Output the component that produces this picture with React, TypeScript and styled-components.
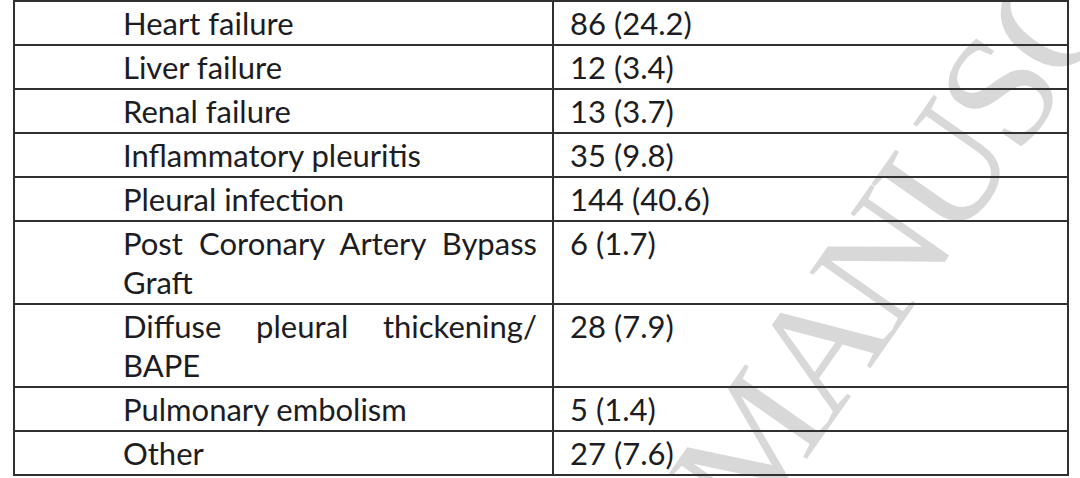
import React from 'react';
import styled, { createGlobalStyle } from 'styled-components';

type Row = { cause: string; count: string; justify?: boolean };

const rows: Row[] = [
  { cause: 'Heart failure', count: '86 (24.2)' },
  { cause: 'Liver failure', count: '12 (3.4)' },
  { cause: 'Renal failure', count: '13 (3.7)' },
  { cause: 'Inflammatory pleuritis', count: '35 (9.8)' },
  { cause: 'Pleural infection', count: '144 (40.6)' },
  { cause: 'Post Coronary Artery Bypass Graft', count: '6 (1.7)', justify: true },
  { cause: 'Diffuse pleural thickening/ BAPE', count: '28 (7.9)', justify: true },
  { cause: 'Pulmonary embolism', count: '5 (1.4)' },
  { cause: 'Other', count: '27 (7.6)' },
];

const GlobalStyle = createGlobalStyle`
  html, body {
    margin: 0;
    padding: 0;
    background: #ffffff;
    overflow: hidden;
  }
`;

const Page = styled.div`
  position: relative;
  width: 1080px;
  height: 478px;
  overflow: hidden;
  padding: 0 0 0 13px;
  box-sizing: border-box;
  background: #ffffff;
`;

// sits under the table so the rules stay on top
const Watermark = styled.span`
  position: absolute;
  left: 708px;
  top: 426px;
  font-family: 'Liberation Serif', 'Times New Roman', serif;
  font-size: 160px;
  letter-spacing: -0.04em;
  line-height: 1;
  color: #d8d8d8;
  white-space: nowrap;
  transform-origin: 0 50%;
  transform: rotate(-55deg);
  pointer-events: none;
  user-select: none;
`;

const Table = styled.table`
  position: relative;
  width: 1054px;
  border-collapse: collapse;
  table-layout: fixed;
  font-family: Lato, 'Open Sans', sans-serif;
  font-size: 31px;
  line-height: 39px;
  color: #1c1c22;
`;

const Col = styled.col<{ $w: number }>`
  width: ${(p) => p.$w}px;
`;

const Cell = styled.td<{ $first?: boolean; $justify?: boolean }>`
  border: 2px solid #303030;
  padding: 2px 15px 1px ${(p) => (p.$first ? '108px' : '16px')};
  vertical-align: top;
  text-align: ${(p) => (p.$justify ? 'justify' : 'left')};
  text-align-last: left;
`;

export default function App() {
  return (
    <Page>
      <GlobalStyle />
      <Watermark>MANUSCRIPT</Watermark>
      <Table>
        <colgroup>
          <Col $w={539} />
          <Col $w={515} />
        </colgroup>
        <tbody>
          {rows.map((r) => (
            <tr key={r.cause}>
              <Cell $first $justify={r.justify}>{r.cause}</Cell>
              <Cell>{r.count}</Cell>
            </tr>
          ))}
        </tbody>
      </Table>
    </Page>
  );
}
